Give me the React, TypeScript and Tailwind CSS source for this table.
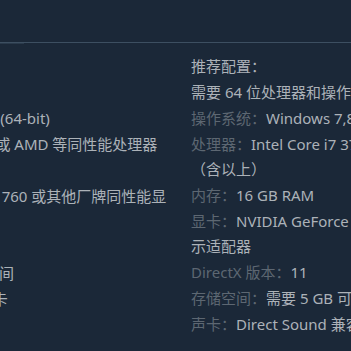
import React from "react";

type Req = { label?: string; value: string };

const minimum: Req[] = [
  { value: "需要 64 位处理器和操作系统" },
  { label: "操作系统：", value: "Windows 7/8/10 (64-bit)" },
  { label: "处理器：", value: "Intel Core i5 3470 或 AMD 等同性能处理器" },
  { label: "内存：", value: "8 GB RAM" },
  { label: "显卡：", value: "NVIDIA GeForce GTX 760 或其他厂牌同性能显示适配器" },
  { label: "DirectX 版本：", value: "11" },
  { label: "存储空间：", value: "需要 5 GB 可用空间" },
  { label: "声卡：", value: "Direct Sound 兼容声卡" },
];

const recommended: Req[] = [
  { value: "需要 64 位处理器和操作系统" },
  { label: "操作系统：", value: "Windows 7,8,10 (64-bit)" },
  { label: "处理器：", value: "Intel Core i7 3770 或 AMD 等同性能处理器（含以上）" },
  { label: "内存：", value: "16 GB RAM" },
  { label: "显卡：", value: "NVIDIA GeForce GTX 970 或其他厂牌同性能显示适配器" },
  { label: "DirectX 版本：", value: "11" },
  { label: "存储空间：", value: "需要 5 GB 可用空间" },
  { label: "声卡：", value: "Direct Sound 兼容声卡" },
];

const ReqColumn = ({ title, items }: { title: string; items: Req[] }) => {
  return (
    <div className="w-[365px] shrink-0">
      <div className="mb-px">{title}</div>
      <ul>
        {items.map((item, i) => (
          <li key={i} className="mb-px">
            {item.label && <span className="text-[#5d6772]">{item.label}</span>}
            {item.value}
          </li>
        ))}
      </ul>
    </div>
  );
};

export default function App() {
  return (
    <div
      className="w-[351px] h-[351px] overflow-hidden bg-[#1b2838] text-[#acb2b8] text-[15px] leading-[25px]"
      style={{ fontFamily: '"Noto Sans", "Noto Sans CJK SC", sans-serif' }}
    >
      <div className="h-[42px]" />
      <div className="h-px bg-[#3d4f61]" />
      <div className="h-px w-[24px] bg-[#2a3a4b]" />
      <div className="flex gap-[18px] -ml-[192px] pt-[10px]">
        <ReqColumn title="最低配置：" items={minimum} />
        <ReqColumn title="推荐配置：" items={recommended} />
      </div>
    </div>
  );
}
